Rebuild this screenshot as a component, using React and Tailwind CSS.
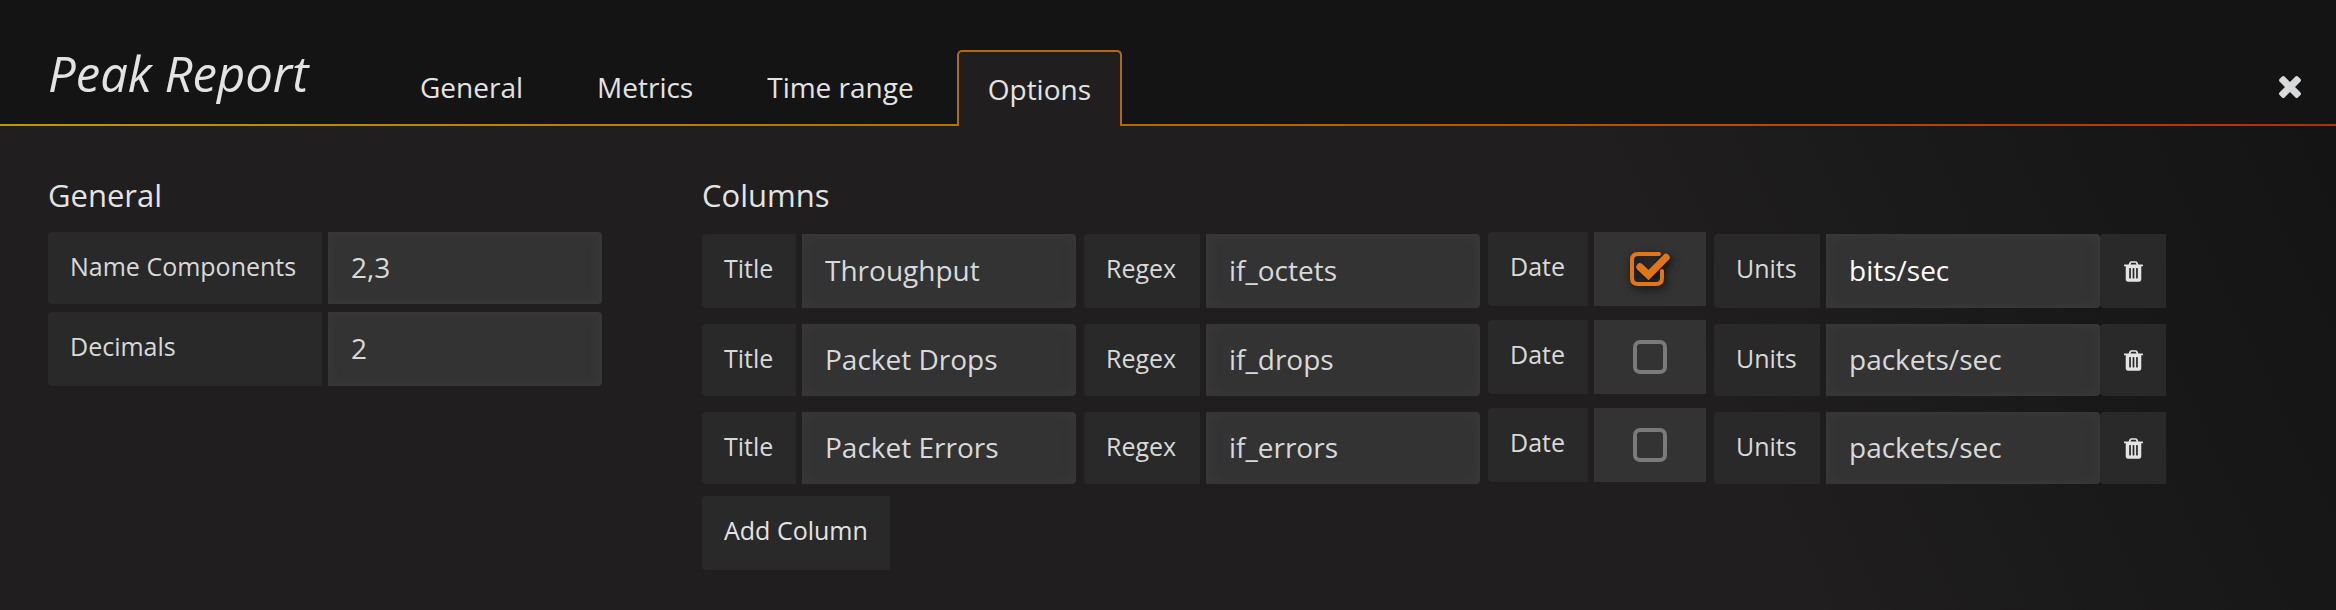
import { useState } from "react";

const TABS = ["General", "Metrics", "Time range", "Options"];

const LABEL =
  "block shrink-0 rounded-l-[4px] bg-[#292929] pt-4 pl-[22px] text-[25px] leading-9 text-[#d8d9da]";
const INPUT =
  "min-w-0 w-[274px] rounded-r-[4px] border-2 border-[#373737] bg-[#333333] px-[21px] pb-[2px] text-[28px] shadow-[inset_0_0_8px_2px_#383838] outline-none";

function CloseIcon() {
  return (
    <svg viewBox="110 366 1188 1188" className="size-[22px]" fill="#d8d9da" aria-hidden="true">
      <path d="M1298 1322q0 40-28 68l-136 136q-28 28-68 28t-68-28l-294-294-294 294q-28 28-68 28t-68-28l-136-136q-28-28-28-68t28-68l294-294-294-294q-28-28-28-68t28-68l136-136q28-28 68-28t68 28l294 294 294-294q28-28 68-28t68 28l136 136q28 28 28 68t-28 68l-294 294 294 294q28 28 28 68z" />
    </svg>
  );
}

function TrashIcon() {
  return (
    <svg viewBox="192 128 1408 1536" className="h-[21px] w-[19px]" fill="#e3e3e3" aria-hidden="true">
      <path d="M704 1376v-704q0-14-9-23t-23-9h-64q-14 0-23 9t-9 23v704q0 14 9 23t23 9h64q14 0 23-9t9-23zm256 0v-704q0-14-9-23t-23-9h-64q-14 0-23 9t-9 23v704q0 14 9 23t23 9h64q14 0 23-9t9-23zm256 0v-704q0-14-9-23t-23-9h-64q-14 0-23 9t-9 23v704q0 14 9 23t23 9h64q14 0 23-9t9-23zm-544-992h448l-48-117q-7-9-17-11h-317q-10 2-17 11zm928 32v64q0 14-9 23t-23 9h-96v948q0 83-47 143.5t-113 60.5h-832q-66 0-113-58.5t-47-141.5v-952h-96q-14 0-23-9t-9-23v-64q0-14 9-23t23-9h309l70-167q15-37 54-63t79-26h320q40 0 79 26t54 63l70 167h309q14 0 23 9t9 23z" />
    </svg>
  );
}

function CheckedIcon() {
  return (
    <svg viewBox="0 0 40 34" className="h-[34px] w-10 overflow-visible drop-shadow-[2px_3px_4px_#0a0a0a]" fill="none" aria-hidden="true">
      <path d="M29 2H8Q2 2 2 8v18q0 6 6 6h18q6 0 6-6v-7" stroke="#e0751a" strokeWidth="4" strokeLinecap="round" />
      <path d="M10 15l8.5 8L36 5.5" stroke="#e0751a" strokeWidth="7.4" strokeLinecap="round" />
    </svg>
  );
}

function Field({ id, label, value, labelWidth, height, tone = "text-[#d8d9da]" }) {
  return (
    <div className={`flex gap-[6px] ${height}`}>
      <label htmlFor={id} className={`${LABEL} ${labelWidth}`}>{label}</label>
      <input id={id} defaultValue={value} className={`${INPUT} ${tone}`} />
    </div>
  );
}

function ColumnRow({ index, row }) {
  const [checked, setChecked] = useState(row.date);
  const height = index === 0 ? "h-[74px]" : "h-[72px]";
  return (
    <div className="flex h-[76px] items-end gap-2">
      <Field id={`title-${index}`} label="Title" value={row.title} labelWidth="w-[94px]" height={height} />
      <Field id={`regex-${index}`} label="Regex" value={row.regex} labelWidth="w-[116px]" height={height} />
      <div className="flex h-[74px] gap-[6px] self-start">
        <label htmlFor={`date-${index}`} className={`${LABEL} w-[100px]`}>Date</label>
        <label className="relative flex w-[112px] shrink-0 items-center justify-center bg-[#333333]">
          <input
            id={`date-${index}`}
            type="checkbox"
            checked={checked}
            onChange={(e) => setChecked(e.target.checked)}
            className="sr-only"
          />
          {checked ? (
            <CheckedIcon />
          ) : (
            <span className="size-[34px] rounded-[7px] border-4 border-[#7a7a7a]" />
          )}
        </label>
      </div>
      <div className="flex">
        <Field
          id={`units-${index}`}
          label="Units"
          value={row.units}
          labelWidth="w-[106px]"
          height={height}
          tone={index === 0 ? "text-white" : "text-[#d8d9da]"}
        />
        <button type="button" aria-label={`Delete ${row.title}`} className="flex w-[66px] shrink-0 items-center justify-center rounded-l-[4px] bg-[#292929]">
          <TrashIcon />
        </button>
      </div>
    </div>
  );
}

const ROWS = [
  { title: "Throughput", regex: "if_octets", date: true, units: "bits/sec" },
  { title: "Packet Drops", regex: "if_drops", date: false, units: "packets/sec" },
  { title: "Packet Errors", regex: "if_errors", date: false, units: "packets/sec" },
];

export default function App() {
  const [active, setActive] = useState("Options");
  return (
    <div className="flex min-h-screen flex-col bg-[#201e1e] font-['Open_Sans',sans-serif] text-[#e3e3e3]">
      <header className="bg-[#141414]">
        <div className="flex h-[124px] items-end pr-[35px] pl-12">
          <h1 className="w-[335px] pb-[17px] text-[49px] leading-[68px] italic whitespace-nowrap">Peak Report</h1>
          <nav className="flex items-end">
            {TABS.map((tab) =>
              tab === active ? (
                <button key={tab} type="button" className="relative z-10 -mb-[2px] ml-[6px] h-[76px] rounded-t-[5px] border-2 border-b-0 border-[#b0681f] bg-[#201e1e] px-[29px] text-[28px]">
                  {tab}
                </button>
              ) : (
                <button key={tab} type="button" onClick={() => setActive(tab)} className="h-[74px] px-[37px] text-[28px]">
                  {tab}
                </button>
              )
            )}
          </nav>
          <button type="button" aria-label="Close" className="ml-auto pb-[26px]">
            <CloseIcon />
          </button>
        </div>
        <div className="h-[2px] bg-linear-to-r from-[#b99a00] via-[#bb6200] to-[#b72d00]" />
      </header>
      <main className="flex flex-1 items-start gap-[100px] bg-[linear-gradient(65deg,#201e1e_0%,#201e1e_70%,#141414_100%)] px-12 pt-[46px] pb-8">
        <section>
          <h2 className="pb-[14px] text-[31px] leading-[46px]">General</h2>
          <div className="flex flex-col gap-2">
            <Field id="name-components" label="Name Components" value="2,3" labelWidth="w-[274px]" height="h-[72px]" />
            <Field id="decimals" label="Decimals" value="2" labelWidth="w-[274px]" height="h-[74px]" />
          </div>
        </section>
        <section>
          <h2 className="pb-[14px] text-[31px] leading-[46px]">Columns</h2>
          <div className="flex flex-col gap-3">
            {ROWS.map((row, i) => (
              <ColumnRow key={row.title} index={i} row={row} />
            ))}
            <button type="button" className="h-[74px] self-start rounded-l-[4px] bg-[#292929] px-[22px] pb-[6px] text-[25px] leading-9">
              Add Column
            </button>
          </div>
        </section>
      </main>
    </div>
  );
}
